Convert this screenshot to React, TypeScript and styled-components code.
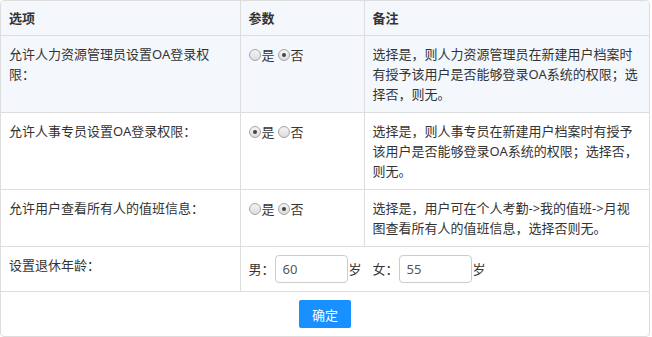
import styled, { createGlobalStyle } from 'styled-components'

const GlobalStyle = createGlobalStyle`
  body {
    margin: 0;
    background: #fff;
    font-family: 'Noto Sans', 'Noto Sans CJK SC', sans-serif;
    font-size: 13px;
    color: #333;
  }
`

const Panel = styled.div`
  width: 648px;
  border: 1px solid #ddd;
  border-radius: 4px;
  overflow: hidden;
  background: #fff;
`

const Table = styled.table`
  width: 100%;
  border-collapse: collapse;
  table-layout: fixed;
  font-size: 13px;
  line-height: 20px;
`

const HeadCell = styled.th`
  text-align: left;
  font-weight: bold;
  color: #333;
  padding: 7px 8px;
  background: #f4f8fd;
  border-bottom: 1px solid #ddd;
  border-left: 1px solid #ddd;
  &:first-child {
    border-left: none;
  }
`

const Row = styled.tr<{ $highlight?: boolean }>`
  background: ${({ $highlight }) => ($highlight ? '#f4f8fd' : '#fff')};
`

const Cell = styled.td`
  padding: 8px 8px;
  vertical-align: top;
  color: #333;
  border-bottom: 1px solid #ddd;
  border-left: 1px solid #ddd;
  &:first-child {
    border-left: none;
  }
`

const RadioGroup = styled.div`
  display: flex;
  align-items: center;
  height: 21px;
`

const RadioLabel = styled.label`
  display: inline-flex;
  align-items: center;
  margin-right: 3px;
`

const Radio = styled.input.attrs({ type: 'radio' })`
  appearance: none;
  margin: 0 1px 0 0;
  width: 12px;
  height: 12px;
  border: 1px solid #a6a6a6;
  border-radius: 50%;
  background: linear-gradient(#f4f4f4, #dcdcdc);
  position: relative;
  &:checked::after {
    content: '';
    position: absolute;
    left: 3px;
    top: 3px;
    width: 4px;
    height: 4px;
    border-radius: 50%;
    background: #444;
  }
`

const AgeLine = styled.div`
  display: flex;
  align-items: center;
  height: 28px;
`

const AgeGroup = styled.span`
  display: inline-flex;
  align-items: center;
  margin-right: 11px;
`

const AgeInput = styled.input`
  box-sizing: border-box;
  width: 73px;
  height: 28px;
  margin: 0 1px 0 0;
  padding: 0 7px;
  border: 1px solid #ccc;
  border-radius: 4px;
  font-family: inherit;
  font-size: 13px;
  color: #555;
  outline: none;
`

const Footer = styled.div`
  display: flex;
  justify-content: center;
  padding: 8px 0;
`

const Button = styled.button`
  height: 28px;
  width: 52px;
  border: none;
  border-radius: 2px;
  background: #1890ff;
  color: #fff;
  font-family: inherit;
  font-size: 13px;
  cursor: pointer;
`

type Option = {
  name: string
  label: string
  yes: boolean
  note: string
  highlight?: boolean
}

const options: Option[] = [
  {
    name: 'hr',
    label: '允许人力资源管理员设置OA登录权限：',
    yes: false,
    note: '选择是，则人力资源管理员在新建用户档案时有授予该用户是否能够登录OA系统的权限；选择否，则无。',
    highlight: true,
  },
  {
    name: 'staff',
    label: '允许人事专员设置OA登录权限：',
    yes: true,
    note: '选择是，则人事专员在新建用户档案时有授予该用户是否能够登录OA系统的权限；选择否，则无。',
  },
  {
    name: 'duty',
    label: '允许用户查看所有人的值班信息：',
    yes: false,
    note: '选择是，用户可在个人考勤->我的值班->月视图查看所有人的值班信息，选择否则无。',
  },
]

const App = () => {
  return (
    <>
      <GlobalStyle />
      <Panel>
        <Table>
          <colgroup>
            <col style={{ width: 239 }} />
            <col style={{ width: 124 }} />
            <col />
          </colgroup>
          <thead>
            <tr>
              <HeadCell>选项</HeadCell>
              <HeadCell>参数</HeadCell>
              <HeadCell>备注</HeadCell>
            </tr>
          </thead>
          <tbody>
            {options.map((o) => (
              <Row key={o.name} $highlight={o.highlight}>
                <Cell>{o.label}</Cell>
                <Cell>
                  <RadioGroup>
                    <RadioLabel>
                      <Radio name={o.name} defaultChecked={o.yes} />是
                    </RadioLabel>
                    <RadioLabel>
                      <Radio name={o.name} defaultChecked={!o.yes} />否
                    </RadioLabel>
                  </RadioGroup>
                </Cell>
                <Cell>{o.note}</Cell>
              </Row>
            ))}
            <Row>
              <Cell>设置退休年龄：</Cell>
              <Cell colSpan={2}>
                <AgeLine>
                  <AgeGroup>
                    男：<AgeInput defaultValue="60" />岁
                  </AgeGroup>
                  <AgeGroup>
                    女：<AgeInput defaultValue="55" />岁
                  </AgeGroup>
                </AgeLine>
              </Cell>
            </Row>
          </tbody>
        </Table>
        <Footer>
          <Button>确定</Button>
        </Footer>
      </Panel>
    </>
  )
}

export default App
